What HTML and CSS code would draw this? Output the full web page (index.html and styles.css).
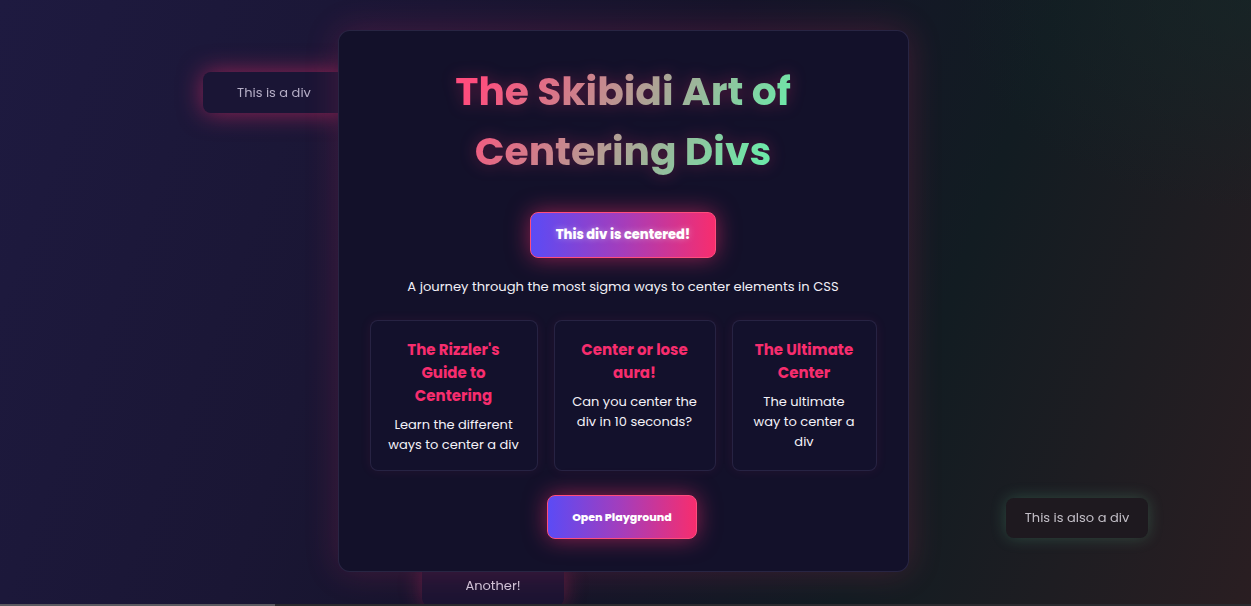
FILE: index.html
```html
<!DOCTYPE html>
<html lang="en">
<head>
<meta charset="utf-8">
<title>The Skibidi Art of Centering Divs</title>
<link rel="stylesheet" href="styles.css">
</head>
<body>
  <div class="float float-one">This is a div</div>
  <div class="float float-two">This is also a div</div>
  <div class="float float-three">Another!</div>

  <main class="stage">
    <section class="panel">
      <h1 class="title">The Skibidi Art of<br>Centering Divs</h1>
      <div class="badge">This div is centered!</div>
      <p class="subtitle">A journey through the most sigma ways to center elements in CSS</p>
      <div class="cards">
        <article class="card">
          <h3 class="card-title">The Rizzler's Guide to Centering</h3>
          <p class="card-text">Learn the different ways to center a div</p>
        </article>
        <article class="card">
          <h3 class="card-title">Center or lose aura!</h3>
          <p class="card-text">Can you center the div in 10 seconds?</p>
        </article>
        <article class="card">
          <h3 class="card-title">The Ultimate Center</h3>
          <p class="card-text">The ultimate way to center a div</p>
        </article>
      </div>
      <button class="cta">Open Playground</button>
    </section>
  </main>
  <div class="scrollbar"><span class="thumb"></span></div>
</body>
</html>
```

FILE: styles.css
```css
* { box-sizing: border-box; }

html, body {
  margin: 0;
  height: 100%;
  overflow: hidden;
}

body {
  font-family: "Poppins", "Inter", "Open Sans", sans-serif;
  color: #ffffff;
  background:
    radial-gradient(ellipse 420px 300px at 1251px 0px, rgba(20, 40, 40, 0.6), transparent 70%),
    linear-gradient(110deg, #1e1a40 0%, #1a1634 30%, #15142a 50%, #121c22 72%, #2a1e22 100%);
  position: relative;
}

.stage {
  display: flex;
  justify-content: center;
  padding-top: 30px;
  padding-right: 5px;
  position: relative;
  z-index: 2;
}

.panel {
  width: 571px;
  height: 542px;
  background: #13112a;
  border: 1px solid rgba(120, 110, 160, 0.22);
  border-radius: 12px;
  box-shadow: 0 0 34px rgba(247, 45, 110, 0.2);
  display: flex;
  flex-direction: column;
  align-items: center;
  padding: 31px 31px 0;
}

.title {
  margin: 0;
  font-size: 39.2px;
  line-height: 60px;
  font-weight: 700;
  text-align: center;
  background: linear-gradient(120deg, #ff4d7d 8%, #6ee7a8 88%);
  -webkit-background-clip: text;
  background-clip: text;
  color: transparent;
  filter: drop-shadow(0 0 8px rgba(247, 45, 110, 0.3));
}

.badge {
  margin-top: 30px;
  width: 186px;
  height: 46px;
  display: flex;
  align-items: center;
  justify-content: center;
  border-radius: 8px;
  border: 1px solid #ff4d7d;
  background: linear-gradient(90deg, #5b4bf5 0%, #a53dbb 50%, #f72d6e 100%);
  box-shadow: 0 0 22px rgba(247, 45, 110, 0.55);
  font-size: 13px;
  font-weight: 800;
  color: #ffffff;
  text-shadow: 0 0 6px rgba(255, 255, 255, 0.4);
}

.subtitle {
  margin: 19px 0 0;
  font-size: 13.1px;
  line-height: 20px;
  color: #f1eff6;
  text-align: center;
}

.cards {
  margin-top: 23px;
  display: grid;
  grid-template-columns: 168px 162px 145px;
  gap: 16px;
}

.card {
  background: #13112c;
  border: 1px solid rgba(120, 110, 160, 0.2);
  border-radius: 8px;
  padding: 17px 16.5px 16px;
  text-align: center;
  height: 151px;
  box-shadow: 0 0 12px rgba(247, 45, 110, 0.08);
}

.card-title {
  margin: 0 0 8px;
  font-size: 15px;
  line-height: 23px;
  font-weight: 700;
  color: #f72d6e;
}

.card-text {
  margin: 0;
  font-size: 13px;
  line-height: 20px;
  color: #f4f2f8;
}

.cta {
  margin-top: 24px;
  margin-right: 2px;
  width: 150px;
  height: 44px;
  border-radius: 8px;
  border: 1px solid #ff4d7d;
  background: linear-gradient(90deg, #5b4bf5 0%, #a53dbb 50%, #f72d6e 100%);
  box-shadow: 0 0 22px rgba(247, 45, 110, 0.55);
  font-family: inherit;
  font-size: 11px;
  font-weight: 800;
  color: #ffffff;
  cursor: pointer;
}

.float {
  position: absolute;
  width: 142px;
  height: 41px;
  display: flex;
  align-items: center;
  justify-content: center;
  border-radius: 8px;
  font-size: 13px;
  z-index: 1;
  filter: blur(0.5px);
}

.float-one {
  left: 203px;
  top: 72px;
  background: #1a1535;
  color: #b5aec6;
  box-shadow: 0 0 24px rgba(247, 45, 110, 0.55);
}

.float-two {
  left: 1006px;
  top: 498px;
  height: 40px;
  background: #1e191f;
  color: #c2bec6;
  box-shadow: 0 0 16px rgba(110, 231, 168, 0.22);
}

.float-three {
  left: 422px;
  top: 565px;
  background: #1b1432;
  color: #cfc8da;
  box-shadow: 0 0 22px rgba(247, 45, 110, 0.35);
}

.scrollbar {
  position: absolute;
  left: 0;
  right: 0;
  bottom: 0;
  height: 2px;
  background: #2a2a2e;
  z-index: 3;
}

.thumb {
  display: block;
  position: absolute;
  left: 0;
  width: 275px;
  height: 2px;
  background: #5a5a60;
}
```
